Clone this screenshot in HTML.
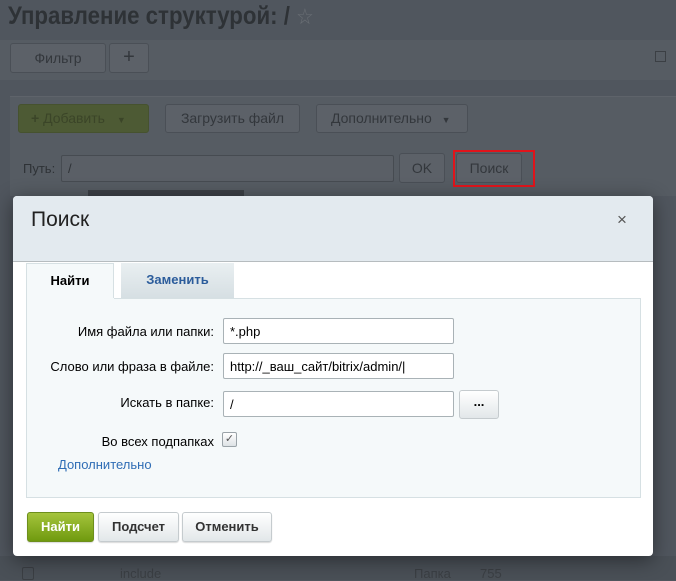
<!DOCTYPE html>
<html><head><meta charset="utf-8"><style>
*{box-sizing:border-box;margin:0;padding:0}
body{width:676px;height:580px;overflow:hidden;background:#50565e;font-family:"Liberation Sans",sans-serif;position:relative;font-size:13px}
.a{position:absolute}
.bb{position:absolute;background:#5c6168;border:1px solid #4a4f56;border-radius:3px;color:#33373c;font-size:14px;text-align:center}
.lbl{position:absolute;right:462px;font-size:13px;color:#000;width:200px;text-align:right}
.inp{position:absolute;left:223px;width:231px;height:26px;border:1px solid #a9b2b6;border-radius:2px;background:#fff;font-size:13px;padding:5px 6px;color:#000}
.btn{position:absolute;top:512px;height:30px;border:1px solid #c5cbce;border-radius:3px;background:linear-gradient(#fff,#e2e7e9);font-weight:bold;font-size:13px;color:#333;text-align:center;line-height:28px;box-shadow:0 1px 1px rgba(0,0,0,.15)}
</style></head><body>
<div class="a" style="left:8px;top:2px;font-size:25px;font-weight:bold;color:#2e3236;transform:scaleX(0.89);transform-origin:left">Управление структурой: / <span style="color:#6a6f75;font-weight:normal;font-size:22px">☆</span></div>
<div class="a" style="left:0;top:40px;width:676px;height:40px;background:#565c63"></div>
<div class="bb" style="left:10px;top:43px;width:96px;height:30px;line-height:28px">Фильтр</div>
<div class="bb" style="left:109px;top:43px;width:40px;height:30px;line-height:26px;font-size:20px">+</div>
<div class="a" style="left:655px;top:51px;width:11px;height:11px;border:1px solid #3b3f44"></div>
<div class="a" style="left:10px;top:96px;width:666px;height:100px;background:#565c63;border-top:1px solid #5e636a"></div>
<div class="bb" style="left:18px;top:104px;width:131px;height:29px;line-height:27px;background:#4d5a34;border-color:#46522f;color:#3b4528;text-align:left;padding-left:12px"><b>+</b> Добавить <span style="font-size:9px;margin-left:8px">▼</span></div>
<div class="bb" style="left:165px;top:104px;width:135px;height:29px;line-height:27px">Загрузить файл</div>
<div class="bb" style="left:316px;top:104px;width:152px;height:29px;line-height:27px;text-align:left;padding-left:14px">Дополнительно <span style="font-size:9px;margin-left:6px">▼</span></div>
<div class="a" style="left:23px;top:161px;color:#2e3236">Путь:</div>
<div class="a" style="left:61px;top:155px;width:333px;height:27px;background:#5a5f66;border:1px solid #464b51;border-radius:2px;color:#2e3236;padding:5px 6px">/</div>
<div class="bb" style="left:399px;top:153px;width:46px;height:30px;line-height:28px">OK</div>
<div class="bb" style="left:456px;top:153px;width:66px;height:30px;line-height:28px">Поиск</div>
<div class="a" style="left:453px;top:150px;width:82px;height:37px;border:2px solid #e0141b"></div>
<div class="a" style="left:88px;top:190px;width:156px;height:8px;background:#3c4046"></div>
<div class="a" style="left:0;top:556px;width:676px;height:24px;background:#4a5057"></div>
<div class="a" style="left:22px;top:567px;width:12px;height:13px;border:1px solid #3b3f44;border-radius:2px"></div>
<div class="a" style="left:120px;top:566px;color:#3b3f44">include</div>
<div class="a" style="left:414px;top:566px;color:#3b3f44">Папка</div>
<div class="a" style="left:480px;top:566px;color:#3b3f44">755</div>

<div class="a" style="left:13px;top:196px;width:640px;height:360px;background:#fff;border-radius:4px;box-shadow:0 4px 20px rgba(0,0,0,.45);overflow:hidden">
 <div class="a" style="left:0;top:0;width:640px;height:66px;background:#e3eaef;border-bottom:1px solid #b6bcbf"></div>
 <div class="a" style="left:18px;top:12px;font-size:21px;color:#222">Поиск</div>
 <div class="a" style="left:604px;top:14px;font-size:17px;color:#555">×</div>
</div>
<div class="a" style="left:26px;top:263px;width:88px;height:36px;background:#f5f9fa;border:1px solid #d6e0e3;border-bottom:none;text-align:center;line-height:34px;font-weight:bold;color:#000">Найти</div>
<div class="a" style="left:121px;top:263px;width:113px;height:35px;background:linear-gradient(#e9eff1,#d6dfe3);text-align:center;line-height:34px;font-weight:bold;color:#2b5c9b">Заменить</div>
<div class="a" style="left:26px;top:298px;width:615px;height:200px;background:#f5f9fa;border:1px solid #d6e0e3;border-top:none"></div>
<div class="a" style="left:114px;top:298px;width:527px;height:1px;background:#d6e0e3"></div>
<div class="lbl" style="top:324px">Имя файла или папки:</div>
<div class="inp" style="top:318px">*.php</div>
<div class="lbl" style="top:359px">Слово или фраза в файле:</div>
<div class="inp" style="top:353px">http://_ваш_сайт/bitrix/admin/|</div>
<div class="lbl" style="top:395px">Искать в папке:</div>
<div class="inp" style="top:391px">/</div>
<div class="a" style="left:459px;top:390px;width:40px;height:29px;border:1px solid #c5cbce;border-radius:3px;background:linear-gradient(#fff,#e2e7e9);text-align:center;line-height:22px;font-weight:bold">...</div>
<div class="lbl" style="top:434px">Во всех подпапках</div>
<div class="a" style="left:222px;top:432px;width:15px;height:15px;border:1px solid #9aa3a8;border-radius:2px;background:linear-gradient(#fff,#dde2e5);font-size:11px;line-height:13px;text-align:center;color:#555">✓</div>
<div class="a" style="left:58px;top:457px;color:#2f6db5">Дополнительно</div>
<div class="btn" style="left:27px;width:67px;background:linear-gradient(#a5c43c,#6f9a0f);border-color:#6d8f1c;color:#fff">Найти</div>
<div class="btn" style="left:98px;width:81px">Подсчет</div>
<div class="btn" style="left:182px;width:90px">Отменить</div>
</body></html>
